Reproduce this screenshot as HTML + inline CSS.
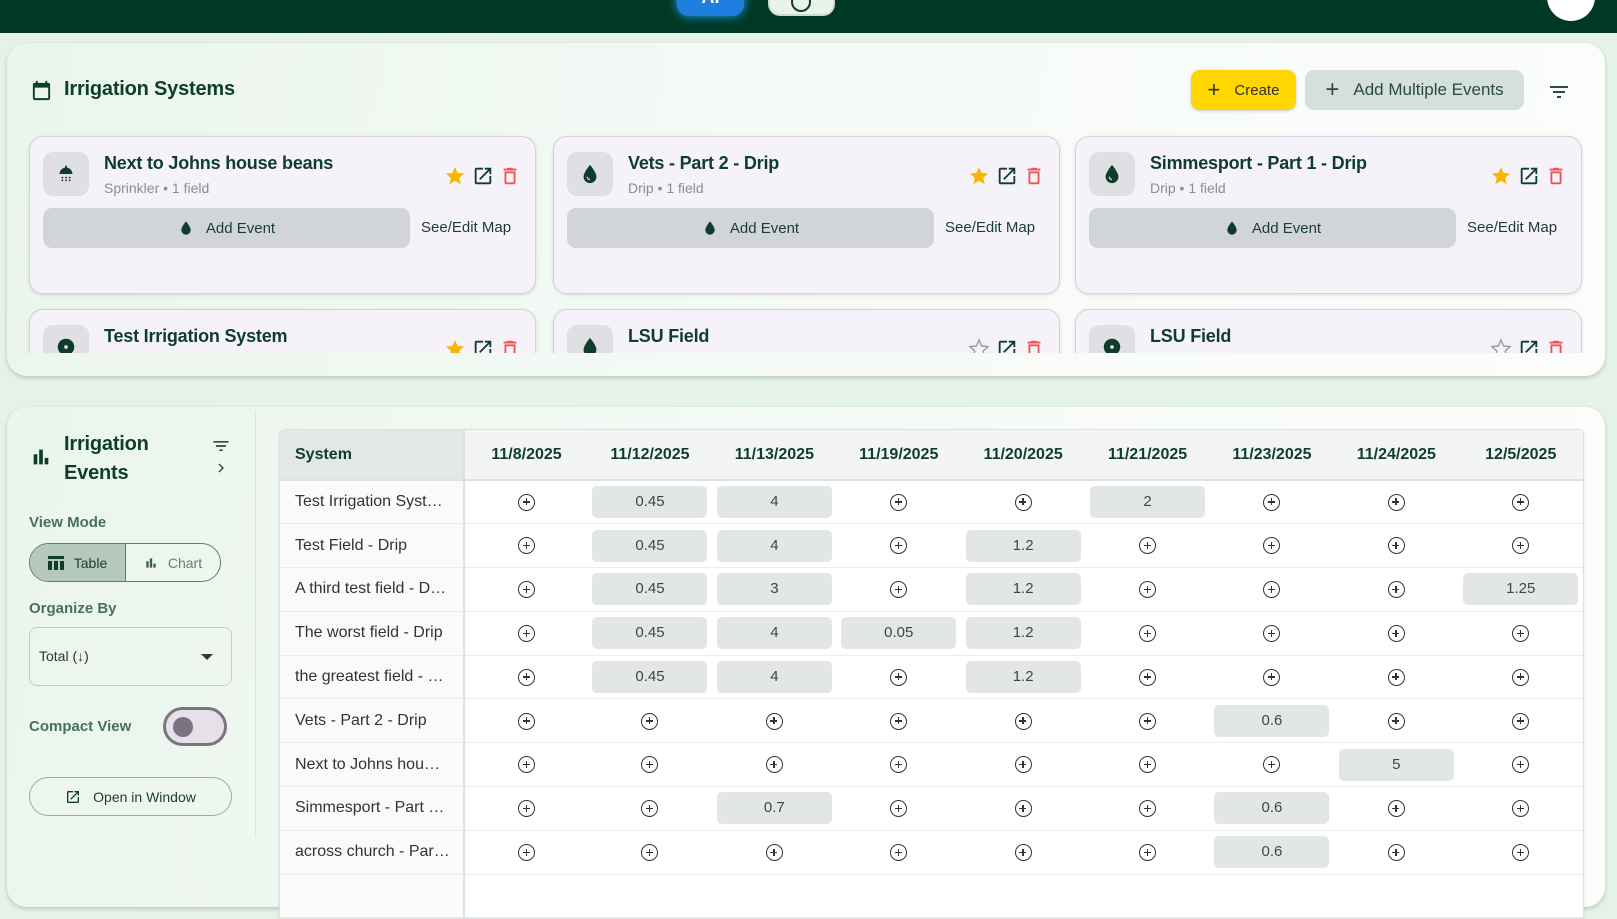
<!DOCTYPE html>
<html><head><meta charset="utf-8"><style>
*{box-sizing:border-box;margin:0;padding:0}
body{width:1617px;height:878px;overflow:hidden;background:#e5f2e8;font-family:"Liberation Sans",sans-serif;position:relative;color:#0f3d2c}
.abs{position:absolute}
.hdr{left:0;top:0;width:1617px;height:33px;background:#003826}
.panel{background:linear-gradient(100deg,#eaf5ec,#f7fbf8 60%,#fbfdfb);border-radius:20px;box-shadow:0 2px 5px rgba(0,0,0,.18)}
.card{width:507px;height:158px;background:#f6f2f9;border:1.5px solid #d2d2d8;border-radius:14px;box-shadow:0 1px 3px rgba(0,0,0,.12)}
.ib{left:13px;top:15px;width:46px;height:44px;background:#e0e0e4;border-radius:10px;display:flex;align-items:center;justify-content:center}
.ct{left:74px;top:16px;font-size:18px;font-weight:bold;color:#0f3d2c;letter-spacing:-0.2px}
.cs{left:74px;top:43px;font-size:14px;color:#8b8f8d}
.ae{left:13px;top:71px;width:367px;height:40px;background:#d1d5da;border-radius:9px;display:flex;align-items:center;justify-content:center;font-size:15px;color:#1b3d2f;gap:12px}
.sm{left:391px;top:82px;font-size:15px;color:#1b3d2f}
.ic{top:28px}
.btn{border-radius:9px;display:flex;align-items:center;justify-content:center;font-size:17px}
table{border-collapse:collapse;font-size:16px;table-layout:fixed}
td,th{height:43.8px;text-align:center;border-bottom:1px solid #ececec;padding:0}
th{height:50px;font-weight:bold;color:#0f3d2c;background:#f3f5f4;border-bottom:2px solid #dde2df}
td.s,th.s{text-align:left;padding-left:15px;width:186px;border-right:2px solid #dde2df;color:#333}
th.s{background:#e2e8e5;color:#0f3d2c}
td,th{width:124.6px}
td{background:#fff;color:#444;font-size:15px}
td.s{background:#fafafa;font-size:16px}
.ch{display:inline-block;width:115px;height:32px;line-height:32px;background:#e3e6e6;border-radius:5px}
.pl{display:inline-block;width:17px;height:17px;border:1.5px solid #333;border-radius:50%;position:relative;vertical-align:middle}
.pl:before{content:"";position:absolute;left:3.5px;top:6.5px;width:7px;height:1.5px;background:#333}
.pl:after{content:"";position:absolute;left:6.5px;top:3.5px;width:1.5px;height:7px;background:#333}
.lbl{font-size:15px;color:#2a5a45;font-weight:bold;opacity:.85}
</style></head><body>
<div class="abs hdr"></div>
<div class="abs" style="left:677px;top:-14px;width:67px;height:30px;background:#1e7fe0;border-radius:0 0 12px 12px;box-shadow:0 0 10px #1aa3ff;color:#fff;text-align:center;font-weight:700;font-size:18px;line-height:22px">AI</div>
<div class="abs" style="left:768px;top:-14px;width:67px;height:30px;background:#e9f3ea;border-radius:0 0 12px 12px;border:2px solid #cfd8d2"></div>
<div class="abs" style="left:791px;top:-8px;width:20px;height:20px;border:2px solid #0f3d2c;border-radius:50%"></div>
<div class="abs" style="left:1547px;top:-27px;width:48px;height:48px;background:#fff;border-radius:50%"></div>

<div class="abs panel" style="left:7px;top:43px;width:1598px;height:333px"></div>
<svg class="abs" style="left:30px;top:79px" width="23" height="23" viewBox="0 0 24 24"><path fill="#0f3d2c" d="M19 4h-1V2h-2v2H8V2H6v2H5a2 2 0 0 0-2 2v14a2 2 0 0 0 2 2h14a2 2 0 0 0 2-2V6a2 2 0 0 0-2-2zm0 16H5V9h14v11z"/></svg>
<div class="abs" style="left:64px;top:78px;font-size:20px;font-weight:bold;letter-spacing:-0.2px">Irrigation Systems</div>
<div class="abs btn" style="left:1191px;top:70px;width:105px;height:40px;background:#ffd600;box-shadow:0 1px 3px rgba(0,0,0,.2);font-size:15px;color:#333;gap:14px"><span style="font-size:22px;font-weight:300">+</span>Create</div>
<div class="abs btn" style="left:1305px;top:70px;width:219px;height:40px;background:#d5dfdb;color:#2a4a3d;gap:14px"><span style="font-size:24px;font-weight:300">+</span>Add Multiple Events</div>
<svg class="abs" style="left:1547px;top:80px" width="24" height="24" viewBox="0 0 24 24"><path fill="#2a4a3d" d="M3 6h18v2H3zM6 11h12v2H6zM10 16h4v2h-4z"/></svg>

<div class="abs" style="left:7px;top:130px;width:1598px;height:223px;overflow:hidden">
<div class="abs card" style="left:22px;top:6px"><div class="abs ib"><svg width="22" height="22" viewBox="0 0 24 24"><path fill="#0f3d2c" d="M11 3h2v2a7 7 0 0 1 6 7H5a7 7 0 0 1 6-7z"/><circle cx="8" cy="16" r="1" fill="#0f3d2c"/><circle cx="12" cy="16" r="1" fill="#0f3d2c"/><circle cx="16" cy="16" r="1" fill="#0f3d2c"/><circle cx="8" cy="19" r="1" fill="#0f3d2c"/><circle cx="12" cy="19" r="1" fill="#0f3d2c"/><circle cx="16" cy="19" r="1" fill="#0f3d2c"/></svg></div><div class="abs ct">Next to Johns house beans</div><div class="abs cs">Sprinkler • 1 field</div><div class="abs ae"><svg width="16" height="18" viewBox="0 0 24 24"><path fill="#0f3d2c" d="M12 2s-7 8-7 13a7 7 0 0 0 14 0c0-5-7-13-7-13z"/></svg>Add Event</div><div class="abs sm">See/Edit Map</div>
<svg class="abs ic" style="left:414px" width="22" height="22" viewBox="0 0 24 24"><path fill="#f5b800" d="M12 17.3l6.2 3.7-1.6-7 5.4-4.7-7.2-.6L12 2 9.2 8.7 2 9.3l5.4 4.7-1.6 7z"/></svg>
<svg class="abs ic" style="left:442px" width="22" height="22" viewBox="0 0 24 24"><path fill="#0f3d2c" d="M19 19H5V5h7V3H5a2 2 0 0 0-2 2v14a2 2 0 0 0 2 2h14a2 2 0 0 0 2-2v-7h-2v7zM14 3v2h3.6l-9.8 9.8 1.4 1.4L19 6.4V10h2V3h-7z"/></svg>
<svg class="abs ic" style="left:469px" width="22" height="22" viewBox="0 0 24 24"><path fill="#ef5350" d="M6 19a2 2 0 0 0 2 2h8a2 2 0 0 0 2-2V7H6v12zm2-10h8v10H8V9zm7.5-5l-1-1h-5l-1 1H5v2h14V4z"/></svg></div>

<div class="abs card" style="left:546px;top:6px"><div class="abs ib"><svg width="22" height="22" viewBox="0 0 24 24"><path fill="#0f3d2c" d="M12 2s-7 8-7 13a7 7 0 0 0 14 0c0-5-7-13-7-13z"/><path d="M9 15a3 3 0 0 0 3 3" stroke="#e0e0e4" stroke-width="1.3" fill="none"/></svg></div><div class="abs ct">Vets - Part 2 - Drip</div><div class="abs cs">Drip • 1 field</div><div class="abs ae"><svg width="16" height="18" viewBox="0 0 24 24"><path fill="#0f3d2c" d="M12 2s-7 8-7 13a7 7 0 0 0 14 0c0-5-7-13-7-13z"/></svg>Add Event</div><div class="abs sm">See/Edit Map</div>
<svg class="abs ic" style="left:414px" width="22" height="22" viewBox="0 0 24 24"><path fill="#f5b800" d="M12 17.3l6.2 3.7-1.6-7 5.4-4.7-7.2-.6L12 2 9.2 8.7 2 9.3l5.4 4.7-1.6 7z"/></svg>
<svg class="abs ic" style="left:442px" width="22" height="22" viewBox="0 0 24 24"><path fill="#0f3d2c" d="M19 19H5V5h7V3H5a2 2 0 0 0-2 2v14a2 2 0 0 0 2 2h14a2 2 0 0 0 2-2v-7h-2v7zM14 3v2h3.6l-9.8 9.8 1.4 1.4L19 6.4V10h2V3h-7z"/></svg>
<svg class="abs ic" style="left:469px" width="22" height="22" viewBox="0 0 24 24"><path fill="#ef5350" d="M6 19a2 2 0 0 0 2 2h8a2 2 0 0 0 2-2V7H6v12zm2-10h8v10H8V9zm7.5-5l-1-1h-5l-1 1H5v2h14V4z"/></svg></div>

<div class="abs card" style="left:1068px;top:6px"><div class="abs ib"><svg width="22" height="22" viewBox="0 0 24 24"><path fill="#0f3d2c" d="M12 2s-7 8-7 13a7 7 0 0 0 14 0c0-5-7-13-7-13z"/><path d="M9 15a3 3 0 0 0 3 3" stroke="#e0e0e4" stroke-width="1.3" fill="none"/></svg></div><div class="abs ct">Simmesport - Part 1 - Drip</div><div class="abs cs">Drip • 1 field</div><div class="abs ae"><svg width="16" height="18" viewBox="0 0 24 24"><path fill="#0f3d2c" d="M12 2s-7 8-7 13a7 7 0 0 0 14 0c0-5-7-13-7-13z"/></svg>Add Event</div><div class="abs sm">See/Edit Map</div>
<svg class="abs ic" style="left:414px" width="22" height="22" viewBox="0 0 24 24"><path fill="#f5b800" d="M12 17.3l6.2 3.7-1.6-7 5.4-4.7-7.2-.6L12 2 9.2 8.7 2 9.3l5.4 4.7-1.6 7z"/></svg>
<svg class="abs ic" style="left:442px" width="22" height="22" viewBox="0 0 24 24"><path fill="#0f3d2c" d="M19 19H5V5h7V3H5a2 2 0 0 0-2 2v14a2 2 0 0 0 2 2h14a2 2 0 0 0 2-2v-7h-2v7zM14 3v2h3.6l-9.8 9.8 1.4 1.4L19 6.4V10h2V3h-7z"/></svg>
<svg class="abs ic" style="left:469px" width="22" height="22" viewBox="0 0 24 24"><path fill="#ef5350" d="M6 19a2 2 0 0 0 2 2h8a2 2 0 0 0 2-2V7H6v12zm2-10h8v10H8V9zm7.5-5l-1-1h-5l-1 1H5v2h14V4z"/></svg></div>

<div class="abs card" style="left:22px;top:179px"><div class="abs ib"><svg width="22" height="22" viewBox="0 0 24 24"><circle cx="12" cy="12" r="9" fill="#0f3d2c"/><circle cx="12" cy="12" r="2" fill="#e0e0e4"/></svg></div><div class="abs ct">Test Irrigation System</div>
<svg class="abs ic" style="left:414px" width="22" height="22" viewBox="0 0 24 24"><path fill="#f5b800" d="M12 17.3l6.2 3.7-1.6-7 5.4-4.7-7.2-.6L12 2 9.2 8.7 2 9.3l5.4 4.7-1.6 7z"/></svg>
<svg class="abs ic" style="left:442px" width="22" height="22" viewBox="0 0 24 24"><path fill="#0f3d2c" d="M19 19H5V5h7V3H5a2 2 0 0 0-2 2v14a2 2 0 0 0 2 2h14a2 2 0 0 0 2-2v-7h-2v7zM14 3v2h3.6l-9.8 9.8 1.4 1.4L19 6.4V10h2V3h-7z"/></svg>
<svg class="abs ic" style="left:469px" width="22" height="22" viewBox="0 0 24 24"><path fill="#ef5350" d="M6 19a2 2 0 0 0 2 2h8a2 2 0 0 0 2-2V7H6v12zm2-10h8v10H8V9zm7.5-5l-1-1h-5l-1 1H5v2h14V4z"/></svg></div>

<div class="abs card" style="left:546px;top:179px"><div class="abs ib"><svg width="22" height="22" viewBox="0 0 24 24"><path fill="#0f3d2c" d="M12 2s-7 8-7 13a7 7 0 0 0 14 0c0-5-7-13-7-13z"/></svg></div><div class="abs ct">LSU Field</div>
<svg class="abs ic" style="left:414px" width="22" height="22" viewBox="0 0 24 24"><path fill="none" stroke="#999" stroke-width="1.5" d="M12 17.3l6.2 3.7-1.6-7 5.4-4.7-7.2-.6L12 2 9.2 8.7 2 9.3l5.4 4.7-1.6 7z"/></svg>
<svg class="abs ic" style="left:442px" width="22" height="22" viewBox="0 0 24 24"><path fill="#0f3d2c" d="M19 19H5V5h7V3H5a2 2 0 0 0-2 2v14a2 2 0 0 0 2 2h14a2 2 0 0 0 2-2v-7h-2v7zM14 3v2h3.6l-9.8 9.8 1.4 1.4L19 6.4V10h2V3h-7z"/></svg>
<svg class="abs ic" style="left:469px" width="22" height="22" viewBox="0 0 24 24"><path fill="#ef5350" d="M6 19a2 2 0 0 0 2 2h8a2 2 0 0 0 2-2V7H6v12zm2-10h8v10H8V9zm7.5-5l-1-1h-5l-1 1H5v2h14V4z"/></svg></div>

<div class="abs card" style="left:1068px;top:179px"><div class="abs ib"><svg width="22" height="22" viewBox="0 0 24 24"><circle cx="12" cy="12" r="9" fill="#0f3d2c"/><circle cx="12" cy="12" r="2" fill="#e0e0e4"/></svg></div><div class="abs ct">LSU Field</div>
<svg class="abs ic" style="left:414px" width="22" height="22" viewBox="0 0 24 24"><path fill="none" stroke="#999" stroke-width="1.5" d="M12 17.3l6.2 3.7-1.6-7 5.4-4.7-7.2-.6L12 2 9.2 8.7 2 9.3l5.4 4.7-1.6 7z"/></svg>
<svg class="abs ic" style="left:442px" width="22" height="22" viewBox="0 0 24 24"><path fill="#0f3d2c" d="M19 19H5V5h7V3H5a2 2 0 0 0-2 2v14a2 2 0 0 0 2 2h14a2 2 0 0 0 2-2v-7h-2v7zM14 3v2h3.6l-9.8 9.8 1.4 1.4L19 6.4V10h2V3h-7z"/></svg>
<svg class="abs ic" style="left:469px" width="22" height="22" viewBox="0 0 24 24"><path fill="#ef5350" d="M6 19a2 2 0 0 0 2 2h8a2 2 0 0 0 2-2V7H6v12zm2-10h8v10H8V9zm7.5-5l-1-1h-5l-1 1H5v2h14V4z"/></svg></div>
</div>

<div class="abs panel" style="left:7px;top:407px;width:1598px;height:500px"></div>
<div class="abs" style="left:255px;top:410px;width:1px;height:428px;background:#dde5e0"></div>
<svg class="abs" style="left:30px;top:446px" width="22" height="22" viewBox="0 0 24 24"><path fill="#0f3d2c" d="M4 9h4v11H4zM10 4h4v16h-4zM16 13h4v7h-4z"/></svg>
<div class="abs" style="left:64px;top:430px;font-size:20px;font-weight:bold;line-height:29px;letter-spacing:-0.2px">Irrigation<br>Events</div>
<svg class="abs" style="left:211px;top:436px" width="20" height="20" viewBox="0 0 24 24"><path fill="#2a4a3d" d="M3 6h18v2H3zM6 11h12v2H6zM10 16h4v2h-4z"/></svg>
<svg class="abs" style="left:213px;top:460px" width="16" height="16" viewBox="0 0 24 24"><path fill="none" stroke="#2a4a3d" stroke-width="2" d="M9 6l6 6-6 6"/></svg>
<div class="abs lbl" style="left:29px;top:514px">View Mode</div>
<div class="abs" style="left:29px;top:543px;width:192px;height:39px;border:1.5px solid #6a7670;border-radius:20px;overflow:hidden;display:flex;font-size:14px">
<div style="width:96px;background:#b5c9bf;border-right:1.5px solid #6a7670;display:flex;align-items:center;justify-content:center;gap:10px;color:#1b3d2f"><svg width="16" height="14" viewBox="0 0 16 14"><path fill="#0f3d2c" d="M0 0h16v3H0zM0 5h4v9H0zM6 5h4v9H6zM12 5h4v9h-4z"/></svg>Table</div>
<div style="flex:1;display:flex;align-items:center;justify-content:center;gap:10px;color:#6b7a72"><svg width="14" height="14" viewBox="0 0 24 24"><path fill="#3a5a4d" d="M4 9h4v11H4zM10 4h4v16h-4zM16 13h4v7h-4z"/></svg>Chart</div></div>
<div class="abs lbl" style="left:29px;top:600px">Organize By</div>
<div class="abs" style="left:29px;top:627px;width:203px;height:59px;border:1.5px solid #c4ccc7;border-radius:8px;font-size:14px;color:#333;padding:20px 0 0 9px">Total (↓)</div>
<div class="abs" style="left:201px;top:654px;width:0;height:0;border-left:6px solid transparent;border-right:6px solid transparent;border-top:6px solid #333"></div>
<div class="abs lbl" style="left:29px;top:718px">Compact View</div>
<div class="abs" style="left:163px;top:707px;width:64px;height:39px;border:3px solid #79747e;border-radius:20px;background:#e6e0e9"></div>
<div class="abs" style="left:173px;top:717px;width:20px;height:20px;border-radius:50%;background:#79747e"></div>
<div class="abs" style="left:29px;top:777px;width:203px;height:39px;border:1.5px solid #9aaba2;border-radius:20px;display:flex;align-items:center;justify-content:center;gap:12px;font-size:14px;color:#1b3d2f"><svg width="16" height="16" viewBox="0 0 24 24"><path fill="#0f3d2c" d="M19 19H5V5h7V3H5a2 2 0 0 0-2 2v14a2 2 0 0 0 2 2h14a2 2 0 0 0 2-2v-7h-2v7zM14 3v2h3.6l-9.8 9.8 1.4 1.4L19 6.4V10h2V3h-7z"/></svg>Open in Window</div>

<div class="abs" style="left:279px;top:429px;width:1305px;border:1px solid #dde2df;border-radius:6px 6px 0 0;overflow:hidden;box-shadow:0 1px 3px rgba(0,0,0,.08)">
<table>
<tr><th class="s">System</th><th>11/8/2025</th><th>11/12/2025</th><th>11/13/2025</th><th>11/19/2025</th><th>11/20/2025</th><th>11/21/2025</th><th>11/23/2025</th><th>11/24/2025</th><th>12/5/2025</th></tr>
<tr><td class="s">Test Irrigation Syst…</td><td><i class="pl"></i></td><td><span class="ch">0.45</span></td><td><span class="ch">4</span></td><td><i class="pl"></i></td><td><i class="pl"></i></td><td><span class="ch">2</span></td><td><i class="pl"></i></td><td><i class="pl"></i></td><td><i class="pl"></i></td></tr>
<tr><td class="s">Test Field - Drip</td><td><i class="pl"></i></td><td><span class="ch">0.45</span></td><td><span class="ch">4</span></td><td><i class="pl"></i></td><td><span class="ch">1.2</span></td><td><i class="pl"></i></td><td><i class="pl"></i></td><td><i class="pl"></i></td><td><i class="pl"></i></td></tr>
<tr><td class="s">A third test field - D…</td><td><i class="pl"></i></td><td><span class="ch">0.45</span></td><td><span class="ch">3</span></td><td><i class="pl"></i></td><td><span class="ch">1.2</span></td><td><i class="pl"></i></td><td><i class="pl"></i></td><td><i class="pl"></i></td><td><span class="ch">1.25</span></td></tr>
<tr><td class="s">The worst field - Drip</td><td><i class="pl"></i></td><td><span class="ch">0.45</span></td><td><span class="ch">4</span></td><td><span class="ch">0.05</span></td><td><span class="ch">1.2</span></td><td><i class="pl"></i></td><td><i class="pl"></i></td><td><i class="pl"></i></td><td><i class="pl"></i></td></tr>
<tr><td class="s">the greatest field - …</td><td><i class="pl"></i></td><td><span class="ch">0.45</span></td><td><span class="ch">4</span></td><td><i class="pl"></i></td><td><span class="ch">1.2</span></td><td><i class="pl"></i></td><td><i class="pl"></i></td><td><i class="pl"></i></td><td><i class="pl"></i></td></tr>
<tr><td class="s">Vets - Part 2 - Drip</td><td><i class="pl"></i></td><td><i class="pl"></i></td><td><i class="pl"></i></td><td><i class="pl"></i></td><td><i class="pl"></i></td><td><i class="pl"></i></td><td><span class="ch">0.6</span></td><td><i class="pl"></i></td><td><i class="pl"></i></td></tr>
<tr><td class="s">Next to Johns hou…</td><td><i class="pl"></i></td><td><i class="pl"></i></td><td><i class="pl"></i></td><td><i class="pl"></i></td><td><i class="pl"></i></td><td><i class="pl"></i></td><td><i class="pl"></i></td><td><span class="ch">5</span></td><td><i class="pl"></i></td></tr>
<tr><td class="s">Simmesport - Part …</td><td><i class="pl"></i></td><td><i class="pl"></i></td><td><span class="ch">0.7</span></td><td><i class="pl"></i></td><td><i class="pl"></i></td><td><i class="pl"></i></td><td><span class="ch">0.6</span></td><td><i class="pl"></i></td><td><i class="pl"></i></td></tr>
<tr><td class="s">across church - Par…</td><td><i class="pl"></i></td><td><i class="pl"></i></td><td><i class="pl"></i></td><td><i class="pl"></i></td><td><i class="pl"></i></td><td><i class="pl"></i></td><td><span class="ch">0.6</span></td><td><i class="pl"></i></td><td><i class="pl"></i></td></tr>
<tr><td class="s"></td><td></td><td></td><td></td><td></td><td></td><td></td><td></td><td></td><td></td></tr>
</table></div>
</body></html>
